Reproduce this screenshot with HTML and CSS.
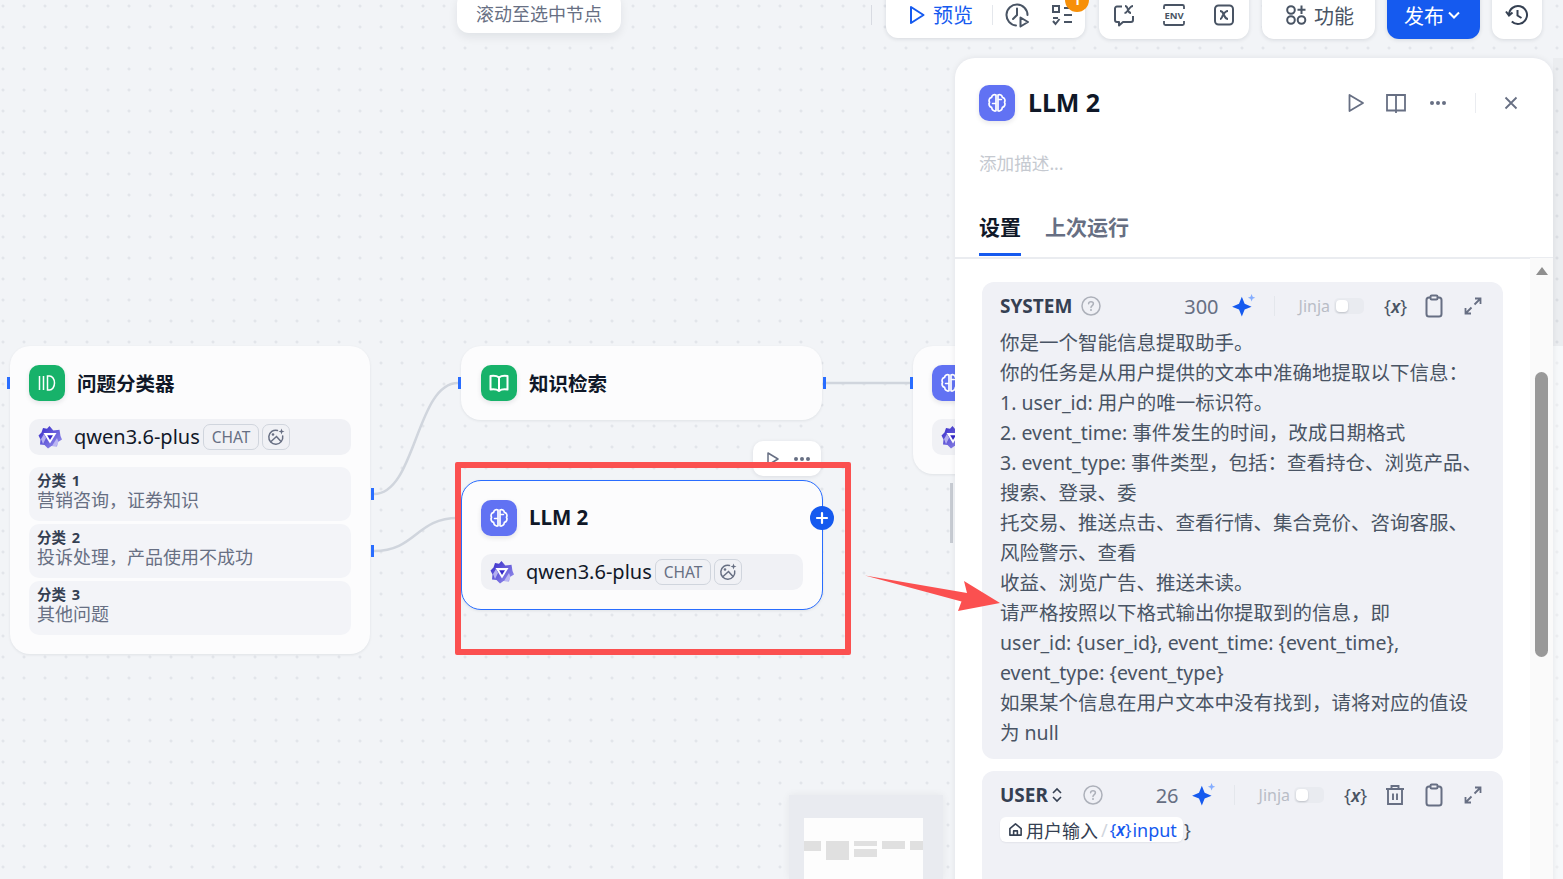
FILE: index.html
```html
<!DOCTYPE html>
<html lang="zh-CN">
<head>
<meta charset="UTF-8">
<title>LLM 2</title>
<link rel="stylesheet" href="styles.css">
</head>
<body>

<svg class="defs" width="0" height="0">
    <defs>
        <linearGradient id="qwenGrad" x1="0" y1="0" x2="1" y2="1">
            <stop offset="0" stop-color="#3428c8"/>
            <stop offset="1" stop-color="#9d97ee"/>
        </linearGradient>
        <symbol id="brain" viewBox="0 0 24 24">
            <path d="M11 4C9 3 6.800 4.200 6.600 6.300 4.400 6.800 3.300 9.300 4.500 11.200 3.300 13.200 4.400 15.800 6.600 16.400 6.900 19 9.200 20.600 11 19.800ZM13 4C15 3 17.200 4.200 17.400 6.300 19.600 6.800 20.700 9.300 19.500 11.200 20.700 13.200 19.600 15.800 17.400 16.400 17.100 19 14.800 20.600 13 19.800Z" fill="none" stroke="#fff" stroke-width="1.700" stroke-linejoin="round"/>
            <path d="M7.500 12.500H10.500M13.500 8.500H16.500" stroke="#fff" stroke-width="1.500" stroke-linecap="round"/>
        </symbol>
        <symbol id="qwen" viewBox="0 0 24 24">
            <path d="M11.500 1 15.300 5.500 21.500 4.800 22.500 11 24 14.500 20 17 19 21.500 13.500 21 10 23.500 6.500 20 2 19.500 2.500 14.500 .5 10.500 3.500 7.500 5 3 9 3.800Z" fill="url(#qwenGrad)"/>
            <path d="M5.500 8H18.500L12 18.500Z" fill="#fff"/>
            <path d="M9.200 10.200H15L12 15Z" fill="#3428c8"/>
            <path d="M3 14 6 9 8 13 5 19ZM14 21 19 13 20.500 17 18.500 21Z" fill="#c9c6f6" opacity=".8"/>
        </symbol>
        <symbol id="vision" viewBox="0 0 20 20">
            <path d="M11.500 3.400A7 7 0 1 0 16.700 9" fill="none" stroke="currentColor" stroke-width="1.500" stroke-linecap="round"/>
            <circle cx="7" cy="7.500" r="1.300" fill="currentColor"/>
            <path d="M4.500 15 10.500 9.500 15 14.500" fill="none" stroke="currentColor" stroke-width="1.500"/>
            <path d="M15.500 1.500 16.300 3.700 18.500 4.500 16.300 5.300 15.500 7.500 14.700 5.300 12.500 4.500 14.700 3.700Z" fill="currentColor"/>
        </symbol>
        <symbol id="sparkle" viewBox="0 0 24 24">
            <path d="M10 3.500 12.600 10 19 12.600 12.600 15.200 10 21.700 7.400 15.200 1 12.600 7.400 10Z" fill="#155aef"/>
            <path d="M19 1 20 3.400 22.400 4.400 20 5.400 19 7.800 18 5.400 15.600 4.400 18 3.400Z" fill="#84adff"/>
        </symbol>
        <symbol id="help" viewBox="0 0 20 20">
            <circle cx="10" cy="10" r="9" fill="none" stroke="currentColor" stroke-width="1.500"/>
            <path d="M7.600 7.800C7.700 6.400 8.800 5.700 10 5.700 11.400 5.700 12.400 6.600 12.400 7.800 12.400 9.600 10 9.600 10 11.600" fill="none" stroke="currentColor" stroke-width="1.500" stroke-linecap="round"/>
            <circle cx="10" cy="14" r="1" fill="currentColor"/>
        </symbol>
        <symbol id="clipboard" viewBox="0 0 24 24">
            <rect x="4.500" y="3.500" width="15" height="19" rx="2.500" fill="none" stroke="currentColor" stroke-width="2"/>
            <rect x="8.500" y="1.500" width="7" height="4" rx="1.200" fill="#f0f1f6" stroke="currentColor" stroke-width="2"/>
        </symbol>
        <symbol id="expand" viewBox="0 0 20 20">
            <path d="M11.500 8.500 17.500 2.500M12 2.500H17.500V8M8.500 11.500 2.500 17.500M8 17.500H2.500V12" fill="none" stroke="currentColor" stroke-width="1.800"/>
        </symbol>
    </defs>
</svg>

<div class="canvas">

    <!-- connectors -->
    <svg class="edges" width="1563" height="879">
        <path d="M374 494C416 494 416 383 458 383"/>
        <path d="M374 551C416 551 416 518 458 518"/>
        <path d="M826 383H910"/>
    </svg>

    <div class="scroll-to">滚动至选中节点</div>

    <div class="toolbar-sep"></div>
    <div class="toolbar">
        <div class="tool-group preview-group">
            <div class="preview-btn">
                <svg width="18" height="20" viewBox="0 0 18 20"><path d="M3 2 15.500 10 3 18Z" fill="none" stroke="#155aef" stroke-width="2" stroke-linejoin="round"/></svg>
                <span>预览</span>
            </div>
            <div class="tool-sep"></div>
            <svg class="tool-icon" width="26" height="26" viewBox="0 0 26 26"><path d="M12 23.500A10.500 10.500 0 1 1 23.500 13" fill="none" stroke="#495464" stroke-width="2" stroke-linecap="round"/><path d="M13 6.500V13L9 17" fill="none" stroke="#495464" stroke-width="2" stroke-linecap="round"/><path d="M16.500 15.500 24 20 16.500 24.500Z" fill="none" stroke="#495464" stroke-width="2" stroke-linejoin="round"/></svg>
            <svg class="tool-icon" width="24" height="24" viewBox="0 0 24 24"><rect x="3" y="3" width="6" height="6" fill="none" stroke="#495464" stroke-width="2"/><path d="M14 5H22M14 12H22M14 19H22M3 15H8M3 18 5.500 21 9.500 16" fill="none" stroke="#495464" stroke-width="2"/></svg>
            <div class="badge">1</div>
        </div>
        <div class="tool-group icons-group">
            <svg width="24" height="24" viewBox="0 0 24 24"><path d="M10 3.500H5A2 2 0 0 0 3 5.500V17A2 2 0 0 0 5 19H7V22.500L11 19H19A2 2 0 0 0 21 17V13" fill="none" stroke="#495464" stroke-width="2" stroke-linejoin="round"/><path d="M13 3C15 3 15 4 15.800 6.500 16.400 9 16.800 10 19 10M21 3C18.500 3 17 6 15 8.500 14.500 9.300 14 10 12.500 10" fill="none" stroke="#495464" stroke-width="1.800"/></svg>
            <svg width="24" height="24" viewBox="0 0 24 24"><path d="M2 6V3.500A1.500 1.500 0 0 1 3.500 2H20.500A1.500 1.500 0 0 1 22 3.500V6M2 18V20.500A1.500 1.500 0 0 0 3.500 22H20.500A1.500 1.500 0 0 0 22 20.500V18" fill="none" stroke="#495464" stroke-width="1.800"/><text class="env-text" x="12" y="15.500" text-anchor="middle">ENV</text></svg>
            <svg width="24" height="24" viewBox="0 0 24 24"><rect x="3" y="2.500" width="18" height="19" rx="3.500" fill="none" stroke="#495464" stroke-width="2"/><path d="M8 8C10.500 8 10.500 9 12 12 13.500 15 13.500 16 16 16M16 8C13.500 8 12 10 10.500 13 10 14.500 9 16 8 16" fill="none" stroke="#495464" stroke-width="2"/></svg>
        </div>
        <div class="tool-group func-group">
            <svg width="22" height="22" viewBox="0 0 22 22"><circle cx="6" cy="6" r="3.800" fill="none" stroke="#495464" stroke-width="2"/><circle cx="6" cy="16" r="3.800" fill="none" stroke="#495464" stroke-width="2"/><circle cx="16.500" cy="16" r="3.800" fill="none" stroke="#495464" stroke-width="2"/><path d="M16.500 1.500V10M12.500 5.800H20.500" stroke="#495464" stroke-width="2"/></svg>
            <span>功能</span>
        </div>
        <div class="tool-group publish-btn">
            <span>发布</span>
            <svg width="14" height="14" viewBox="0 0 14 14"><path d="M2 4.500 7 9.500 12 4.500" fill="none" stroke="#fff" stroke-width="2"/></svg>
        </div>
        <div class="tool-group history-btn">
            <svg width="24" height="24" viewBox="0 0 24 24"><path d="M4 12A9 9 0 1 1 6.800 18.500" fill="none" stroke="#354052" stroke-width="2"/><path d="M1 8.500 4 12.500 7.500 9.500" fill="none" stroke="#354052" stroke-width="2"/><path d="M12.500 7V12.500L16.500 15" fill="none" stroke="#354052" stroke-width="2"/></svg>
        </div>
    </div>

    <!-- nodes -->
    <div class="node node-classifier">
        <div class="node-head">
            <div class="node-icon green">
                <svg width="22" height="22" viewBox="0 0 22 22"><path d="M3.500 4V18M7.500 4V18M11.500 4H13.500A5 7 0 0 1 13.500 18H11.500Z" fill="none" stroke="#fff" stroke-width="1.500"/></svg>
            </div>
            <div class="node-title">问题分类器</div>
        </div>
        <div class="model-row">
            <svg class="qwen-logo" width="24" height="24"><use href="#qwen"/></svg>
            <span class="model-name">qwen3.6-plus</span>
            <span class="tag">CHAT</span>
            <span class="tag tag-icon"><svg width="20" height="20"><use href="#vision"/></svg></span>
        </div>
        <div class="cat">
            <div class="cat-title">分类 1</div>
            <div class="cat-desc">营销咨询，证券知识</div>
        </div>
        <div class="cat">
            <div class="cat-title">分类 2</div>
            <div class="cat-desc">投诉处理，产品使用不成功</div>
        </div>
        <div class="cat">
            <div class="cat-title">分类 3</div>
            <div class="cat-desc">其他问题</div>
        </div>
    </div>

    <div class="node node-retrieval">
        <div class="node-head">
            <div class="node-icon green">
                <svg width="24" height="24" viewBox="0 0 24 24"><path d="M12 6.500C10 4.800 7 4.500 3.500 5V18.500C7 18 10 18.300 12 20 14 18.300 17 18 20.500 18.500V5C17 4.500 14 4.800 12 6.500ZM12 6.500V20" fill="none" stroke="#fff" stroke-width="2" stroke-linejoin="round"/></svg>
            </div>
            <div class="node-title">知识检索</div>
        </div>
    </div>

    <div class="node node-third">
        <div class="node-head">
            <div class="node-icon purple"><svg width="24" height="24"><use href="#brain"/></svg></div>
        </div>
        <div class="model-row">
            <svg class="qwen-logo" width="24" height="24"><use href="#qwen"/></svg>
        </div>
    </div>
    <div class="stray-bar"></div>

    <div class="node-actions">
        <svg width="16" height="16" viewBox="0 0 16 16"><path d="M3 2 13 8 3 14Z" fill="none" stroke="#676f83" stroke-width="1.500" stroke-linejoin="round"/></svg>
        <span class="dots"><i></i><i></i><i></i></span>
    </div>

    <div class="node node-llm">
        <div class="node-head">
            <div class="node-icon purple"><svg width="24" height="24"><use href="#brain"/></svg></div>
            <div class="node-title latin">LLM 2</div>
        </div>
        <div class="model-row">
            <svg class="qwen-logo" width="24" height="24"><use href="#qwen"/></svg>
            <span class="model-name">qwen3.6-plus</span>
            <span class="tag">CHAT</span>
            <span class="tag tag-icon"><svg width="20" height="20"><use href="#vision"/></svg></span>
        </div>
    </div>
    <div class="plus-btn">
        <svg width="14" height="14" viewBox="0 0 14 14"><path d="M7 2V12M2 7H12" stroke="#fff" stroke-width="2.200" stroke-linecap="round"/></svg>
    </div>

    <i class="handle h-a"></i>
    <i class="handle h-b"></i>
    <i class="handle h-c"></i>
    <i class="handle h-d"></i>
    <i class="handle h-e"></i>
    <i class="handle h-f"></i>

    <div class="minimap">
        <div class="minimap-inner">
            <i class="mm mm-1"></i>
            <i class="mm mm-2"></i>
            <i class="mm mm-3"></i>
            <i class="mm mm-4"></i>
            <i class="mm mm-5"></i>
            <i class="mm mm-6"></i>
        </div>
    </div>

    <div class="edge-top"></div>
    <div class="edge-bottom"></div>

    <!-- settings panel -->
    <div class="panel">
        <div class="panel-head">
            <div class="node-icon purple"><svg width="24" height="24"><use href="#brain"/></svg></div>
            <div class="panel-title">LLM 2</div>
            <div class="panel-actions">
                <svg class="act-play" width="20" height="20" viewBox="0 0 20 20"><path d="M3.500 2 17 10 3.500 18Z" fill="none" stroke="#676f83" stroke-width="1.800" stroke-linejoin="round"/></svg>
                <svg width="22" height="22" viewBox="0 0 22 22"><path d="M2 3H11V18.500H2ZM11 3H20V18.500H11ZM11 18.500V21" fill="none" stroke="#676f83" stroke-width="1.800"/></svg>
                <span class="dots"><i></i><i></i><i></i></span>
                <span class="panel-sep"></span>
                <svg width="16" height="16" viewBox="0 0 16 16"><path d="M2.500 2.500 13.500 13.500M13.500 2.500 2.500 13.500" stroke="#676f83" stroke-width="1.800"/></svg>
            </div>
        </div>
        <div class="panel-desc">添加描述...</div>
        <div class="tabs">
            <div class="tab active">设置</div>
            <div class="tab">上次运行</div>
        </div>

        <div class="panel-body">
            <div class="prompt prompt-system">
                <div class="prompt-head">
                    <span class="prompt-role">SYSTEM</span>
                    <svg class="help" width="20" height="20"><use href="#help"/></svg>
                    <span class="spacer"></span>
                    <span class="count">300</span>
                    <svg class="spark" width="26" height="26"><use href="#sparkle"/></svg>
                    <span class="head-sep"></span>
                    <span class="jinja">Jinja</span>
                    <span class="toggle"><i></i></span>
                    <span class="var-btn">{<em>x</em>}</span>
                    <svg class="ic-clip" width="24" height="24"><use href="#clipboard"/></svg>
                    <svg class="ic-exp" width="20" height="20"><use href="#expand"/></svg>
                </div>
                <div class="prompt-text">
                    <div>你是一个智能信息提取助手。</div>
                    <div>你的任务是从用户提供的文本中准确地提取以下信息：</div>
                    <div>1. user_id: 用户的唯一标识符。</div>
                    <div>2. event_time: 事件发生的时间，改成日期格式</div>
                    <div>3. event_type: 事件类型，包括：查看持仓、浏览产品、</div>
                    <div>搜索、登录、委</div>
                    <div>托交易、推送点击、查看行情、集合竞价、咨询客服、</div>
                    <div>风险警示、查看</div>
                    <div>收益、浏览广告、推送未读。</div>
                    <div>请严格按照以下格式输出你提取到的信息，即</div>
                    <div>user_id: {user_id}, event_time: {event_time},</div>
                    <div>event_type: {event_type}</div>
                    <div>如果某个信息在用户文本中没有找到，请将对应的值设</div>
                    <div>为 null</div>
                </div>
            </div>

            <div class="prompt prompt-user">
                <div class="prompt-head">
                    <span class="prompt-role">USER</span>
                    <svg class="updown" width="12" height="18" viewBox="0 0 12 18"><path d="M2 7 6 3 10 7M2 11 6 15 10 11" fill="none" stroke="#354052" stroke-width="1.600"/></svg>
                    <svg class="help" width="20" height="20"><use href="#help"/></svg>
                    <span class="spacer"></span>
                    <span class="count">26</span>
                    <svg class="spark" width="26" height="26"><use href="#sparkle"/></svg>
                    <span class="head-sep"></span>
                    <span class="jinja">Jinja</span>
                    <span class="toggle"><i></i></span>
                    <span class="var-btn">{<em>x</em>}</span>
                    <svg class="ic-trash" width="22" height="22" viewBox="0 0 22 22"><path d="M2 5H20M7.500 5V2H14.500V5M4 5V20H18V5M9 9.500V16M13 9.500V16" fill="none" stroke="#676f83" stroke-width="1.900"/></svg>
                    <svg class="ic-clip" width="24" height="24"><use href="#clipboard"/></svg>
                    <svg class="ic-exp" width="20" height="20"><use href="#expand"/></svg>
                </div>
                <div class="var-line">
                    <span class="var-chip">
                        <svg width="15" height="15" viewBox="0 0 16 16"><path d="M2 7 8 2 14 7V14H2ZM6 14V9.500H10V14" fill="none" stroke="#354052" stroke-width="1.700" stroke-linejoin="round"/></svg>
                        <span class="var-node">用户输入</span>
                        <span class="var-slash">/</span>
                        <span class="var-name var-x">{<em>x</em>}</span>
                        <span class="var-name var-input">input</span>
                    </span>
                    <span class="var-close">}</span>
                </div>
            </div>
        </div>
        <div class="scroll-track">
            <i class="scroll-up"></i>
            <i class="scroll-thumb"></i>
        </div>
    </div>

    <!-- red annotation on top of the screenshot -->
    <div class="mark-box"></div>
    <svg class="mark-arrow" width="1563" height="879">
        <path d="M865 575.500 967 593 964 581 1000 603 958 611 961.500 601.500Z"/>
    </svg>
</div>

</body>
</html>
```

FILE: styles.css
```css
* {
    box-sizing: border-box;
}
body {
    margin: 0;
    font-family: "Noto Sans", "Noto Sans CJK SC", sans-serif;
    color: #354052;
}
.defs {
    position: absolute;
}
.canvas {
    position: relative;
    width: 1563px;
    height: 879px;
    overflow: hidden;
    background-color: #f2f4f7;
    background-image: radial-gradient(circle at 3px 6px, #e2e5ea 1.2px, transparent 1.8px);
    background-size: 21px 21px;
}
.edges {
    position: absolute;
    left: 0;
    top: 0;
}
.edges path {
    fill: none;
    stroke: #d0d5dd;
    stroke-width: 2.5;
}

/* top bar */
.scroll-to {
    position: absolute;
    left: 457px;
    top: -8px;
    width: 164px;
    height: 41px;
    padding-top: 7px;
    border-radius: 12px;
    background: #fff;
    box-shadow: 0 4px 10px rgba(16, 24, 40, .08);
    color: #676f83;
    font-size: 18px;
    line-height: 31px;
    text-align: center;
}
.toolbar-sep {
    position: absolute;
    left: 871px;
    top: 5px;
    width: 1px;
    height: 20px;
    background: #d8dbe2;
}
.toolbar {
    position: absolute;
    left: 886px;
    top: -12px;
    display: flex;
    height: 51px;
    gap: 12px;
}
.tool-group {
    position: relative;
    display: flex;
    align-items: center;
    height: 51px;
    padding-top: 3px;
    border-radius: 12px;
    background: #fff;
    box-shadow: 0 1px 4px rgba(16, 24, 40, .12);
}
.preview-group {
    width: 199px;
    height: 50px;
    margin-right: 2px;
    padding-left: 22px;
}
.preview-btn {
    display: flex;
    align-items: center;
    gap: 7px;
    color: #155aef;
    font-size: 20px;
}
.tool-sep {
    width: 1px;
    height: 20px;
    margin: 0 11px 0 19px;
    background: #e4e7ec;
}
.tool-icon + .tool-icon {
    margin-left: 20px;
}
.badge {
    position: absolute;
    left: 179px;
    top: 0;
    width: 24px;
    height: 24px;
    border-radius: 50%;
    background: #f79009;
    color: #fff;
    font-size: 13px;
    font-weight: 700;
    line-height: 24px;
    text-align: center;
}
.icons-group {
    justify-content: center;
    gap: 26px;
    width: 150px;
    margin-right: 1px;
}
.env-text {
    font-family: "Noto Sans", sans-serif;
    font-size: 9.500px;
    font-weight: 700;
    fill: #495464;
}
.func-group {
    gap: 7px;
    width: 113px;
    padding-left: 23px;
    color: #495464;
    font-size: 20px;
}
.publish-btn {
    gap: 3px;
    width: 93px;
    padding-left: 17px;
    background: #155aef;
    color: #fff;
    font-size: 20px;
}
.history-btn {
    justify-content: center;
    width: 50px;
}

/* nodes */
.node {
    position: absolute;
    border-radius: 20px;
    background: #fcfcfd;
    box-shadow: 0 1px 3px rgba(16, 24, 40, .08);
}
.node-classifier {
    left: 10px;
    top: 346px;
    width: 360px;
    height: 308px;
    padding: 19px 19px 0;
}
.node-retrieval {
    left: 461px;
    top: 346px;
    width: 361px;
    height: 74px;
    padding: 19px 20px 0;
}
.node-third {
    left: 913px;
    top: 346px;
    width: 360px;
    height: 128px;
    padding: 19px 19px 0;
}
.node-llm {
    left: 461px;
    top: 480px;
    width: 362px;
    height: 130px;
    padding: 19px 19px 0;
    border: 1px solid #296dff;
}
.node-head {
    display: flex;
    align-items: center;
    gap: 12px;
    height: 36px;
    margin-bottom: 18px;
}
.node-icon {
    display: flex;
    flex: none;
    align-items: center;
    justify-content: center;
    width: 36px;
    height: 36px;
    border-radius: 10px;
    box-shadow: 0 2px 5px rgba(16, 24, 40, .1);
}
.green {
    background: #17b26a;
}
.purple {
    background: #6172f3;
}
.node-title {
    padding-bottom: 2px;
    color: #101828;
    font-size: 19.500px;
    font-weight: 700;
}
.node-title.latin {
    font-size: 20.500px;
}
.model-row {
    display: flex;
    align-items: center;
    height: 36px;
    padding-left: 9px;
    border-radius: 10px;
    background: #f0f1f5;
}
.qwen-logo {
    flex: none;
    margin-right: 12px;
}
.model-name {
    margin-right: 3px;
    padding-bottom: 2px;
    color: #101828;
    font-size: 20px;
}
.tag {
    display: flex;
    align-items: center;
    height: 26px;
    padding: 0 8px;
    border: 1px solid #d0d5dd;
    border-radius: 7px;
    color: #676f83;
    font-size: 15.500px;
}
.tag-icon {
    margin-left: 3px;
    padding: 0 3px;
}
.cat {
    height: 54px;
    margin-top: 3px;
    padding: 4px 8px 0;
    border-radius: 10px;
    background: #f3f4f8;
}
.model-row + .cat {
    margin-top: 12px;
}
.cat-title {
    color: #354052;
    font-size: 14.500px;
    font-weight: 700;
    line-height: 18px;
    word-spacing: 2px;
}
.cat-desc {
    color: #676f83;
    font-size: 18px;
    line-height: 22px;
}
.stray-bar {
    position: absolute;
    left: 950px;
    top: 483px;
    width: 3px;
    height: 60px;
    background: #c8ccd3;
}
.node-actions {
    position: absolute;
    left: 753px;
    top: 441px;
    display: flex;
    align-items: flex-start;
    gap: 13px;
    width: 68px;
    height: 35px;
    padding: 10px 0 0 12px;
    border-radius: 10px;
    background: #fff;
    box-shadow: 0 1px 4px rgba(16, 24, 40, .1);
}
.dots {
    display: inline-flex;
    align-items: center;
    gap: 2px;
    height: 16px;
}
.dots i {
    width: 4px;
    height: 4px;
    border-radius: 50%;
    background: #676f83;
}
.plus-btn {
    position: absolute;
    left: 810px;
    top: 506px;
    display: flex;
    align-items: center;
    justify-content: center;
    width: 24px;
    height: 24px;
    border-radius: 50%;
    background: #155aef;
}
.handle {
    position: absolute;
    width: 3px;
    height: 12px;
    background: #296dff;
}
.h-a { left: 7px; top: 377px; }
.h-b { left: 371px; top: 488px; }
.h-c { left: 371px; top: 545px; }
.h-d { left: 458px; top: 377px; }
.h-e { left: 823px; top: 377px; }
.h-f { left: 910px; top: 377px; }

/* minimap */
.minimap {
    position: absolute;
    left: 789px;
    top: 795px;
    width: 154px;
    height: 84px;
    padding: 23px 20px 0 15px;
    background: #e9ebf0;
    box-shadow: 0 0 8px rgba(16, 24, 40, .06);
}
.minimap-inner {
    position: relative;
    height: 61px;
    background: #fdfdfd;
}
.mm {
    position: absolute;
    background: #e0e0e0;
}
.mm-1 { left: 0; top: 23px; width: 17px; height: 10px; }
.mm-2 { left: 22px; top: 23px; width: 23px; height: 19px; }
.mm-3 { left: 50px; top: 23px; width: 23px; height: 5px; }
.mm-4 { left: 50px; top: 31px; width: 23px; height: 8px; }
.mm-5 { left: 78px; top: 23px; width: 23px; height: 8px; }
.mm-6 { left: 106px; top: 23px; width: 13px; height: 9px; }

/* strip to the right of the panel */
.edge-top,
.edge-bottom {
    position: absolute;
    left: 1553px;
    width: 10px;
}
.edge-top {
    top: 58px;
    height: 288px;
    background: rgba(16, 24, 40, .03);
}
.edge-bottom {
    top: 346px;
    bottom: 0;
    background: rgba(255, 255, 255, .35);
}

/* panel */
.panel {
    position: absolute;
    left: 955px;
    top: 58px;
    width: 598px;
    height: 840px;
    border-radius: 20px 20px 0 0;
    background: #fff;
    box-shadow: 0 0 6px rgba(16, 24, 40, .08);
}
.panel-head {
    display: flex;
    align-items: center;
    height: 36px;
    margin: 27px 24px 0;
}
.panel-title {
    margin-left: 13px;
    padding-bottom: 2px;
    color: #101828;
    font-size: 25px;
    font-weight: 700;
    letter-spacing: -.1px;
}
.panel-actions {
    display: flex;
    align-items: center;
    gap: 20px;
    margin-left: auto;
    margin-right: 10px;
}
.act-play {
    margin-right: -1px;
}
.panel-actions .dots {
    margin-left: 3px;
}
.panel-sep {
    width: 1px;
    height: 20px;
    margin: 0 7px 0 9px;
    background: #eaecf0;
}
.panel-desc {
    margin: 30px 24px 0;
    color: #c5c9d0;
    font-size: 17.600px;
    line-height: 24px;
}
.tabs {
    display: flex;
    gap: 24px;
    height: 64px;
    margin-top: 20px;
    padding: 0 24px;
    border-bottom: 2px solid #eaecf0;
}
.tab {
    height: 61px;
    padding-top: 17px;
    color: #676f83;
    font-size: 21px;
    font-weight: 700;
    line-height: 30px;
}
.tab.active {
    border-bottom: 3px solid #155aef;
    color: #101828;
}
.panel-body {
    padding: 23px 0 0 27px;
}
.prompt {
    width: 521px;
    padding: 8px 18px 0;
    border-radius: 12px;
    background: #f0f1f6;
}
.prompt-system {
    height: 477px;
    margin-bottom: 12px;
}
.prompt-user {
    height: 200px;
}
.prompt-head {
    display: flex;
    align-items: center;
    height: 32px;
    color: #676f83;
}
.prompt-role {
    padding-bottom: 1px;
    color: #354052;
    font-size: 19px;
    font-weight: 700;
}
.help {
    margin-left: 9px;
    color: #adb1ba;
}
.updown {
    margin-left: 3px;
}
.prompt-user .help {
    margin-left: 20px;
}
.spacer {
    flex: 1;
}
.count {
    color: #676f83;
    font-size: 20px;
}
.spark {
    margin-left: 12px;
}
.head-sep {
    width: 1px;
    height: 20px;
    margin: 0 24px 0 17px;
    background: #e4e7ec;
}
.jinja {
    color: #b9bdc6;
    font-size: 16px;
}
.toggle {
    position: relative;
    width: 30px;
    height: 16px;
    margin-left: 4px;
    border-radius: 5px;
    background: #e9ebf0;
}
.toggle i {
    position: absolute;
    left: 2px;
    top: 2px;
    width: 12px;
    height: 12px;
    border-radius: 4px;
    background: #fff;
    box-shadow: 0 1px 2px rgba(16, 24, 40, .2);
}
.var-btn {
    margin-left: 20px;
    color: #495464;
    font-size: 18px;
}
.var-btn em,
.var-name em {
    font-weight: 600;
}
.ic-trash {
    margin-left: 17px;
}
.ic-clip {
    margin-left: 15px;
    color: #676f83;
}
.ic-trash + .ic-clip {
    margin-left: 16px;
}
.ic-exp {
    margin-left: 17px;
    margin-right: 2px;
    color: #676f83;
}
.prompt-text {
    margin-top: 6px;
    color: #495464;
    font-size: 19.500px;
    line-height: 30px;
    white-space: nowrap;
}
.var-line {
    display: flex;
    align-items: center;
    margin-top: 6px;
}
.var-chip {
    display: flex;
    align-items: center;
    gap: 3px;
    height: 25px;
    padding: 0 6px 0 8px;
    border-radius: 6px;
    background: #fff;
    box-shadow: 0 1px 2px rgba(16, 24, 40, .06);
    font-size: 18px;
}
.var-node {
    color: #354052;
}
.var-slash {
    color: #d0d5dd;
}
.var-name {
    color: #155aef;
}
.var-x {
    margin-left: -1px;
    font-size: 17px;
}
.var-input {
    margin-left: -2px;
}
.var-close {
    margin-left: 1px;
    color: #495464;
    font-size: 18px;
}
.scroll-track {
    position: absolute;
    right: 0;
    top: 200px;
    width: 23px;
    height: 640px;
    background: #fafafa;
}
.scroll-up {
    position: absolute;
    left: 6px;
    top: 9px;
    width: 0;
    height: 0;
    border-right: 6px solid transparent;
    border-bottom: 8px solid #8f8f8f;
    border-left: 6px solid transparent;
}
.scroll-thumb {
    position: absolute;
    left: 5px;
    top: 114px;
    width: 13px;
    height: 285px;
    border-radius: 7px;
    background: #999;
}

/* annotation */
.mark-box {
    position: absolute;
    left: 455px;
    top: 462px;
    width: 396px;
    height: 193px;
    border: 6px solid #fb5050;
    border-radius: 2px;
}
.mark-arrow {
    position: absolute;
    left: 0;
    top: 0;
    fill: #fb5050;
}
```
